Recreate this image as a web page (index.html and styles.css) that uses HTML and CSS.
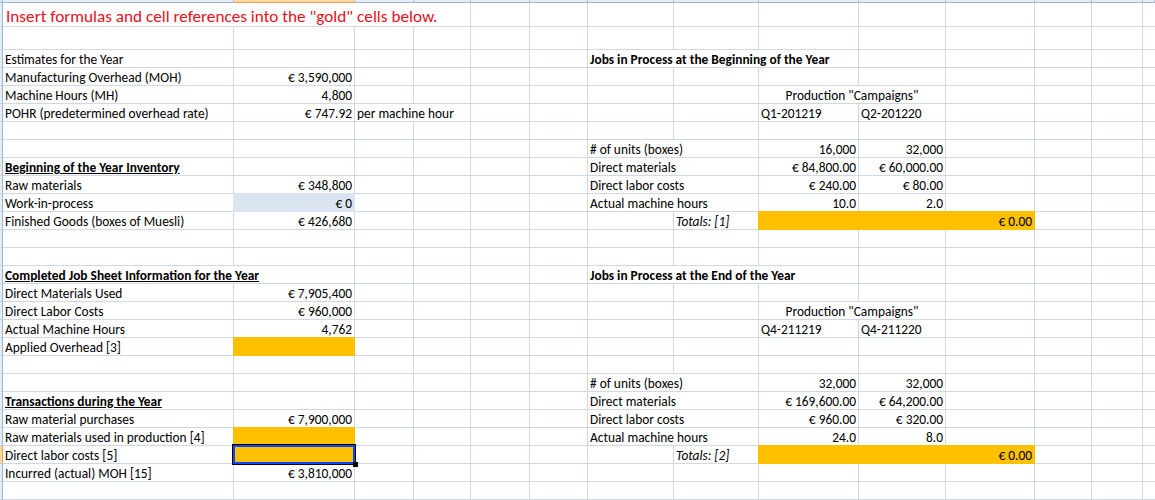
FILE: index.html
```html
<!DOCTYPE html>
<html lang="en">
<head>
<meta charset="utf-8">
<title>Job costing worksheet</title>
<link rel="stylesheet" href="styles.css">
</head>
<body>
<div class="window">
  <div class="corner"></div>
  <div class="colheads">
    <div class="ch"></div><div class="ch active"></div><div class="ch"></div><div class="ch"></div><div class="ch"></div><div class="ch"></div><div class="ch"></div><div class="ch"></div><div class="ch"></div><div class="ch"></div><div class="ch"></div><div class="ch"></div><div class="ch"></div><div class="ch"></div>
  </div>
  <div class="rowheads">
    <div class="rh"></div><div class="rh"></div><div class="rh"></div><div class="rh"></div><div class="rh"></div><div class="rh"></div><div class="rh"></div><div class="rh"></div><div class="rh"></div><div class="rh"></div><div class="rh"></div><div class="rh"></div><div class="rh"></div><div class="rh"></div><div class="rh"></div><div class="rh"></div><div class="rh"></div><div class="rh"></div><div class="rh"></div><div class="rh"></div><div class="rh"></div><div class="rh"></div><div class="rh"></div><div class="rh"></div><div class="rh active"></div><div class="rh"></div><div class="rh"></div>
  </div>
  <div class="sheet">
    <div class="row title-row">
      <div class="cell col-a span-4 over title">Insert formulas and cell references into the "gold" cells below.</div>
    </div>
    <div class="row gap-row"></div>
    <div class="row">
      <div class="cell col-a">Estimates for the Year</div>
      <div class="cell col-g span-3 over head">Jobs in Process at the Beginning of the Year</div>
    </div>
    <div class="row">
      <div class="cell col-a">Manufacturing Overhead (MOH)</div>
      <div class="cell col-b num">€ 3,590,000</div>
    </div>
    <div class="row">
      <div class="cell col-a">Machine Hours (MH)</div>
      <div class="cell col-b num">4,800</div>
      <div class="cell col-i span-2 over center">Production "Campaigns"</div>
    </div>
    <div class="row">
      <div class="cell col-a">POHR (predetermined overhead rate)</div>
      <div class="cell col-b num">€ 747.92</div>
      <div class="cell col-c span-2 over">per machine hour</div>
      <div class="cell col-i">Q1-201219</div>
      <div class="cell col-j">Q2-201220</div>
    </div>
    <div class="row"></div>
    <div class="row">
      <div class="cell col-g span-2 over">#&nbsp;of units (boxes)</div>
      <div class="cell col-i num">16,000</div>
      <div class="cell col-j num">32,000</div>
    </div>
    <div class="row">
      <div class="cell col-a head under">Beginning of the Year Inventory</div>
      <div class="cell col-g span-2 over">Direct materials</div>
      <div class="cell col-i num">€ 84,800.00</div>
      <div class="cell col-j num">€ 60,000.00</div>
    </div>
    <div class="row">
      <div class="cell col-a">Raw materials</div>
      <div class="cell col-b num">€ 348,800</div>
      <div class="cell col-g span-2 over">Direct labor costs</div>
      <div class="cell col-i num">€ 240.00</div>
      <div class="cell col-j num">€ 80.00</div>
    </div>
    <div class="row">
      <div class="cell col-a">Work-in-process</div>
      <div class="cell col-b num wip">€ 0</div>
      <div class="cell col-g span-2 over">Actual machine hours</div>
      <div class="cell col-i num">10.0</div>
      <div class="cell col-j num">2.0</div>
    </div>
    <div class="row">
      <div class="cell col-a">Finished Goods (boxes of Muesli)</div>
      <div class="cell col-b num">€ 426,680</div>
      <div class="cell col-h italic">Totals: [1]</div>
      <div class="cell col-i span-3 num gold">€ 0.00</div>
    </div>
    <div class="row"></div>
    <div class="row"></div>
    <div class="row">
      <div class="cell col-a span-2 over head under">Completed Job Sheet Information for the Year</div>
      <div class="cell col-g span-3 over head">Jobs in Process at the End of the Year</div>
    </div>
    <div class="row">
      <div class="cell col-a">Direct Materials Used</div>
      <div class="cell col-b num">€ 7,905,400</div>
    </div>
    <div class="row">
      <div class="cell col-a">Direct Labor Costs</div>
      <div class="cell col-b num">€ 960,000</div>
      <div class="cell col-i span-2 over center">Production "Campaigns"</div>
    </div>
    <div class="row">
      <div class="cell col-a">Actual Machine Hours</div>
      <div class="cell col-b num">4,762</div>
      <div class="cell col-i">Q4-211219</div>
      <div class="cell col-j">Q4-211220</div>
    </div>
    <div class="row">
      <div class="cell col-a">Applied Overhead [3]</div>
      <div class="cell col-b gold"></div>
    </div>
    <div class="row"></div>
    <div class="row">
      <div class="cell col-g span-2 over">#&nbsp;of units (boxes)</div>
      <div class="cell col-i num">32,000</div>
      <div class="cell col-j num">32,000</div>
    </div>
    <div class="row">
      <div class="cell col-a head under">Transactions during the Year</div>
      <div class="cell col-g span-2 over">Direct materials</div>
      <div class="cell col-i num">€ 169,600.00</div>
      <div class="cell col-j num">€ 64,200.00</div>
    </div>
    <div class="row">
      <div class="cell col-a">Raw material purchases</div>
      <div class="cell col-b num">€ 7,900,000</div>
      <div class="cell col-g span-2 over">Direct labor costs</div>
      <div class="cell col-i num">€ 960.00</div>
      <div class="cell col-j num">€ 320.00</div>
    </div>
    <div class="row">
      <div class="cell col-a">Raw materials used in production [4]</div>
      <div class="cell col-b gold"></div>
      <div class="cell col-g span-2 over">Actual machine hours</div>
      <div class="cell col-i num">24.0</div>
      <div class="cell col-j num">8.0</div>
    </div>
    <div class="row">
      <div class="cell col-a">Direct labor costs [5]</div>
      <div class="cell col-b gold selected"></div>
      <div class="cell col-h italic">Totals: [2]</div>
      <div class="cell col-i span-3 num gold">€ 0.00</div>
    </div>
    <div class="row">
      <div class="cell col-a">Incurred (actual) MOH [15]</div>
      <div class="cell col-b num">€ 3,810,000</div>
    </div>
    <div class="row"></div>
  </div>
</div>
</body>
</html>
```

FILE: styles.css
```css
:root {
  --grid: #d0d7e5;
  --gold: #ffc000;
  --cols: 231px 121px 59px 57px 59px 58px 86px 85px 100px 87px 89px 57px 51px 1fr;
}

* { box-sizing: border-box; }

html, body {
  margin: 0;
  padding: 0;
  background: #fff;
}

body {
  width: 1155px;
  height: 500px;
  overflow: hidden;
  font-family: Carlito, Lato, "Liberation Sans", sans-serif;
  font-size: 13.4px;
  color: #000;
}

.window {
  display: grid;
  grid-template-columns: 3px 1152px;
  grid-template-rows: 3px 497px;
}

.corner {
  background: #dfe7f1;
  border-right: 1px solid #9eb6ce;
  border-bottom: 1px solid #9eb6ce;
}

.colheads {
  display: grid;
  grid-template-columns: var(--cols);
}

.ch {
  background: #e4ecf7;
  border-right: 1px solid #b2c4da;
  border-bottom: 1px solid #9eb6ce;
}

.ch.active {
  background: #f9d99f;
  border-bottom-color: #f0a04b;
}

.rowheads {
  display: grid;
  grid-template-rows: 24px 23px repeat(25, 18px);
}

.rh {
  background: #e4ecf7;
  border-right: 1px solid #9eb6ce;
  border-bottom: 1px solid #c6d3e3;
}

.rh.active {
  background: #f9d99f;
  border-right-color: #f0a04b;
}

.sheet {
  background-image:
    linear-gradient(var(--grid), var(--grid)),
    linear-gradient(var(--grid), var(--grid)),
    linear-gradient(var(--grid), var(--grid)),
    linear-gradient(var(--grid), var(--grid)),
    linear-gradient(var(--grid), var(--grid)),
    linear-gradient(var(--grid), var(--grid)),
    linear-gradient(var(--grid), var(--grid)),
    linear-gradient(var(--grid), var(--grid)),
    linear-gradient(var(--grid), var(--grid)),
    linear-gradient(var(--grid), var(--grid)),
    linear-gradient(var(--grid), var(--grid)),
    linear-gradient(var(--grid), var(--grid)),
    linear-gradient(var(--grid), var(--grid));
  background-size: 1px 100%;
  background-repeat: no-repeat;
  background-position:
    230px 0, 351px 0, 410px 0, 467px 0, 526px 0, 584px 0, 670px 0,
    755px 0, 855px 0, 942px 0, 1031px 0, 1088px 0, 1139px 0;
}

.row {
  display: grid;
  grid-template-columns: var(--cols);
  height: 18px;
  border-bottom: 1px solid var(--grid);
}

.row.title-row { height: 24px; }
.row.gap-row { height: 23px; }

.cell {
  height: 17px;
  padding: 0 2px;
  line-height: 19px;
  white-space: nowrap;
  min-width: 0;
}

.col-a { grid-column-start: 1; }
.col-b { grid-column-start: 2; }
.col-c { grid-column-start: 3; }
.col-g { grid-column-start: 7; }
.col-h { grid-column-start: 8; }
.col-i { grid-column-start: 9; }
.col-j { grid-column-start: 10; }

.span-2 { grid-column-end: span 2; }
.span-3 { grid-column-end: span 3; }
.span-4 { grid-column-end: span 4; }

.over {
  background: #fff;
  border-right: 1px solid var(--grid);
}

.num {
  text-align: right;
  padding-right: 3px;
}

.center { text-align: center; }

.head { font-weight: bold; }
.under { text-decoration: underline; }
.italic { font-style: italic; }

.title {
  height: 23px;
  font-size: 17.2px;
  line-height: 27px;
  color: #e8101c;
  padding-left: 3px;
}

.gold,
.wip {
  box-shadow:
    -1px -1px 0 var(--fill),
    -1px 1px 0 var(--fill),
    0 -1px 0 var(--fill),
    0 1px 0 var(--fill);
  background: var(--fill);
}

.gold { --fill: var(--gold); }
.wip { --fill: #dbe5f1; }

.selected { position: relative; }

.selected::after {
  content: "";
  position: absolute;
  left: -2px;
  top: -2px;
  right: -1px;
  bottom: -2px;
  border: 1px solid #000;
  box-shadow: inset 0 0 0 2px #0a46ff;
}

.selected::before {
  content: "";
  position: absolute;
  right: -3px;
  bottom: -4px;
  width: 5px;
  height: 5px;
  background: #000;
  z-index: 1;
}
```
